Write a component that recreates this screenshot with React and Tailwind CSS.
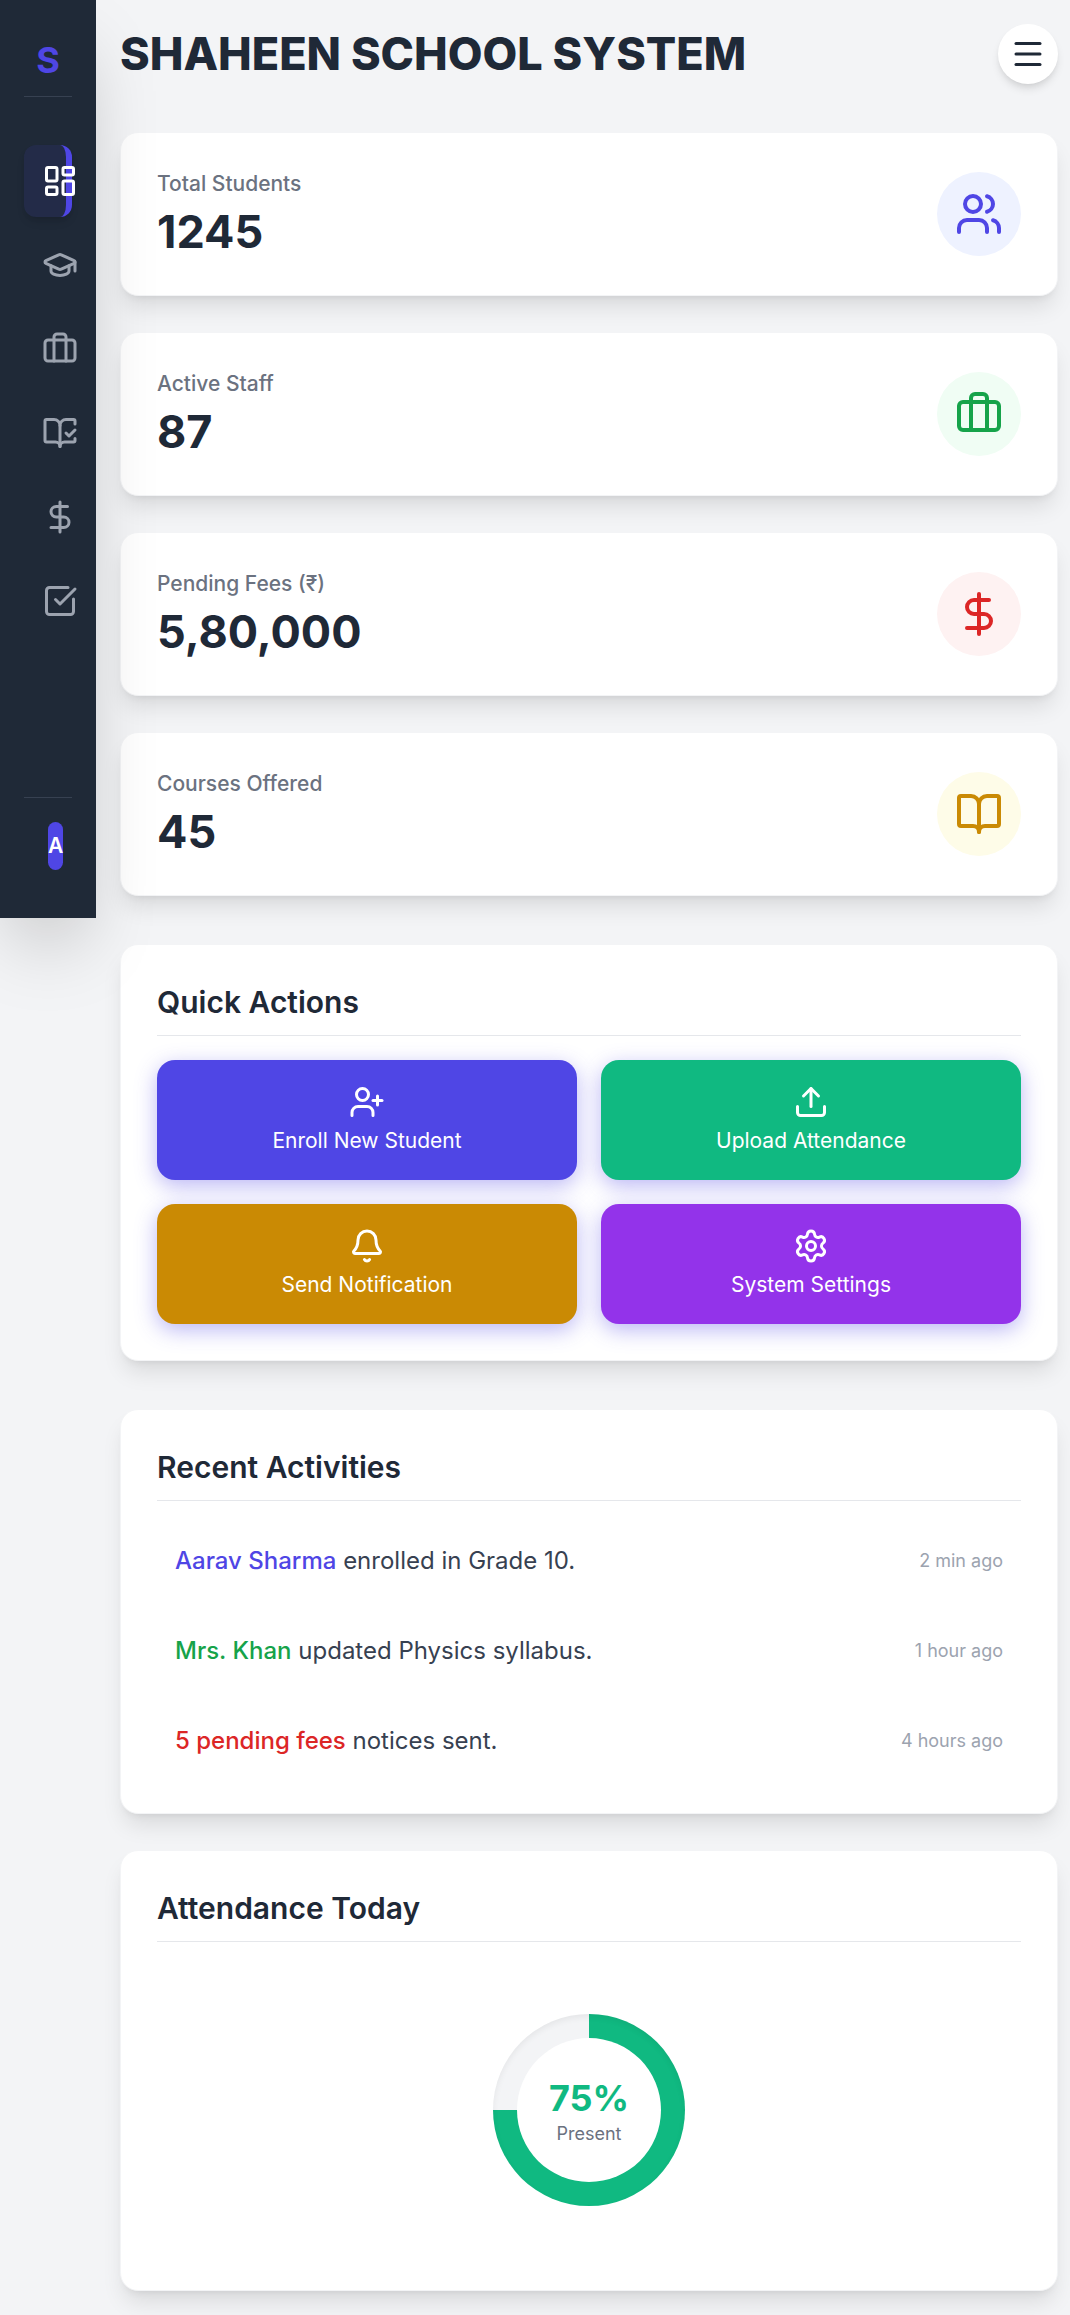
import {
  Bell,
  BookOpen,
  BookOpenCheck,
  DollarSign,
  GraduationCap,
  LayoutDashboard,
  Menu,
  Settings,
  SquareCheckBig,
  Upload,
  UserPlus,
  Users,
} from "lucide-react";

function Suitcase({ className }) {
  return (
    <svg
      viewBox="0 0 24 24"
      fill="none"
      stroke="currentColor"
      strokeWidth="2"
      strokeLinecap="round"
      strokeLinejoin="round"
      className={className}
      aria-hidden="true"
    >
      <path d="M16 20V4a2 2 0 0 0-2-2h-4a2 2 0 0 0-2 2v16" />
      <rect width="20" height="14" x="2" y="6" rx="2" />
    </svg>
  );
}

const navItems = [
  { label: "Dashboard", icon: LayoutDashboard, active: true },
  { label: "Students", icon: GraduationCap },
  { label: "Staff", icon: Suitcase },
  { label: "Courses", icon: BookOpenCheck },
  { label: "Fees", icon: DollarSign },
  { label: "Attendance", icon: SquareCheckBig },
];

const stats = [
  { label: "Total Students", value: "1245", icon: Users, tone: "bg-[#eef2ff] text-[#4f46e5]" },
  { label: "Active Staff", value: "87", icon: Suitcase, tone: "bg-[#f0fdf4] text-[#16a34a]" },
  { label: "Pending Fees (₹)", value: "5,80,000", icon: DollarSign, tone: "bg-[#fef2f2] text-[#dc2626]" },
  { label: "Courses Offered", value: "45", icon: BookOpen, tone: "bg-[#fefce8] text-[#ca8a04]" },
];

const actions = [
  { label: "Enroll New Student", icon: UserPlus, tone: "bg-[#4f46e5]" },
  { label: "Upload Attendance", icon: Upload, tone: "bg-[#10b981]" },
  { label: "Send Notification", icon: Bell, tone: "bg-[#ca8a04]" },
  { label: "System Settings", icon: Settings, tone: "bg-[#9333ea]" },
];

const activities = [
  { who: "Aarav Sharma", what: "enrolled in Grade 10.", when: "2 min ago", tone: "text-[#4f46e5]" },
  { who: "Mrs. Khan", what: "updated Physics syllabus.", when: "1 hour ago", tone: "text-[#16a34a]" },
  { who: "5 pending fees", what: "notices sent.", when: "4 hours ago", tone: "text-[#dc2626]" },
];

function Card({ className = "", children }) {
  return (
    <section
      className={`rounded-[18px] border border-[#f3f4f6] bg-white p-9 shadow-[0_15px_22px_-4px_rgba(0,0,0,0.1),0_6px_9px_-6px_rgba(0,0,0,0.1)] ${className}`}
    >
      {children}
    </section>
  );
}

function CardTitle({ children }) {
  return (
    <h2 className="mb-6 border-b border-[#e5e7eb] pb-3 text-[30px] leading-[42px] font-semibold">
      {children}
    </h2>
  );
}

function Sidebar() {
  return (
    <aside className="relative z-10 flex h-[918px] w-24 shrink-0 flex-col bg-[#1f2937] px-6 shadow-[0_38px_75px_-18px_rgba(0,0,0,0.25)]">
      <div className="border-b border-[#374151] pt-9 pb-3 text-center text-[36px] leading-[48px] font-bold text-[#4f46e5]">
        S
      </div>
      <nav className="mt-12 flex flex-1 flex-col gap-3">
        {navItems.map(({ label, icon: Icon, active }) => (
          <a
            key={label}
            href="#"
            aria-label={label}
            className={
              active
                ? "flex rounded-xl border-r-6 border-[#4f46e5] bg-[#4f46e5]/10 p-[18px] text-white shadow-[0_6px_9px_-1px_rgba(0,0,0,0.1),0_3px_6px_-3px_rgba(0,0,0,0.1)]"
                : "flex rounded-xl p-[18px] text-[#9ca3af]"
            }
          >
            <Icon className="size-9 shrink-0" />
          </a>
        ))}
      </nav>
      <div className="mb-6 flex border-t border-[#374151] p-6">
        <div className="flex h-12 items-center justify-center rounded-full bg-[#4f46e5] text-[21px] font-semibold text-white">
          A
        </div>
      </div>
    </aside>
  );
}

export default function App() {
  return (
    <div className="flex min-h-screen items-start bg-[#f3f4f6] font-['Inter',sans-serif] text-[#1f2937]">
      <Sidebar />
      <main className="min-w-0 flex-1 py-6 pr-3 pl-6">
        <header className="mb-12 flex items-center justify-between">
          <h1 className="text-[45px] leading-[54px] font-extrabold">SHAHEEN SCHOOL SYSTEM</h1>
          <button
            type="button"
            aria-label="Open menu"
            className="rounded-full bg-white p-3 shadow-[0_6px_9px_-1px_rgba(0,0,0,0.1),0_3px_6px_-3px_rgba(0,0,0,0.1)]"
          >
            <Menu className="size-9" />
          </button>
        </header>

        <div className="mb-12 grid gap-9">
          {stats.map(({ label, value, icon: Icon, tone }) => (
            <Card key={label} className="flex items-center justify-between">
              <div>
                <p className="text-[21px] leading-[30px] font-medium text-[#6b7280]">{label}</p>
                <p className="mt-1.5 text-[45px] leading-[54px] font-bold">{value}</p>
              </div>
              <div className={`rounded-full p-[18px] ${tone}`}>
                <Icon className="size-12" />
              </div>
            </Card>
          ))}
        </div>

        <Card className="mb-12">
          <CardTitle>Quick Actions</CardTitle>
          <div className="grid grid-cols-2 gap-6">
            {actions.map(({ label, icon: Icon, tone }) => (
              <button
                key={label}
                type="button"
                className={`flex flex-col items-center gap-1.5 rounded-[18px] p-6 text-[21px] leading-[30px] text-white shadow-[0_6px_21px_rgba(79,70,229,0.39)] ${tone}`}
              >
                <Icon className="size-9" />
                {label}
              </button>
            ))}
          </div>
        </Card>

        <div className="grid gap-9">
          <Card>
            <CardTitle>Recent Activities</CardTitle>
            <ul className="flex flex-col gap-[18px]">
              {activities.map(({ who, what, when, tone }) => (
                <li key={who} className="flex items-center justify-between p-[18px]">
                  <p className="text-2xl leading-9 text-[#374151]">
                    <span className={`font-medium ${tone}`}>{who}</span> {what}
                  </p>
                  <time className="text-lg leading-6 text-[#9ca3af]">{when}</time>
                </li>
              ))}
            </ul>
          </Card>

          <Card>
            <CardTitle>Attendance Today</CardTitle>
            <div className="flex justify-center py-12">
              <div className="flex size-48 items-center justify-center rounded-full bg-[conic-gradient(#10b981_0_75%,#f3f4f6_75%_100%)] shadow-[inset_0_3px_6px_rgba(0,0,0,0.06)]">
                <div className="flex size-36 flex-col items-center justify-center rounded-full bg-white">
                  <span className="text-[36px] leading-[48px] font-bold text-[#10b981]">75%</span>
                  <span className="text-lg leading-6 text-[#6b7280]">Present</span>
                </div>
              </div>
            </div>
          </Card>
        </div>
      </main>
    </div>
  );
}
